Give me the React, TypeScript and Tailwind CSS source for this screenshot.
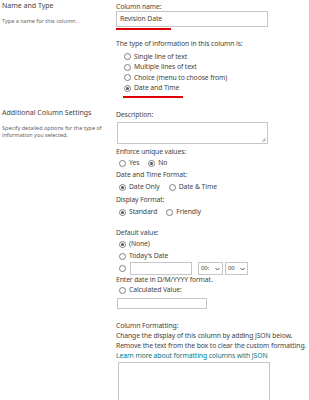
import React from "react";

function Radio({ checked, label, className }: { checked?: boolean; label?: string; className?: string }) {
  return (
    <span className={"flex items-center " + (className ?? "")}>
      <span className="flex h-[7px] w-[7px] shrink-0 items-center justify-center rounded-full border border-[#808080] bg-white">
        {checked && <span className="h-[3px] w-[3px] rounded-full bg-[#555]" />}
      </span>
      {label && <span className="ml-[3px]">{label}</span>}
    </span>
  );
}

function Line({ children, className }: { children: React.ReactNode; className?: string }) {
  return <div className={"h-[10px] leading-[10px] whitespace-nowrap " + (className ?? "")}>{children}</div>;
}

function Select({ value, className }: { value: string; className?: string }) {
  return (
    <span
      className={
        "flex h-[13px] items-center justify-between border border-[#c6c6c6] bg-white px-[2px] text-[6px] " +
        (className ?? "")
      }
    >
      <span>{value}</span>
      <svg width="5" height="4" viewBox="0 0 5 4">
        <path d="M0.5 1 L2.5 3 L4.5 1" fill="none" stroke="#444" strokeWidth="0.9" />
      </svg>
    </span>
  );
}

export default function App() {
  return (
    <div
      className="flex h-[400px] w-[309px] overflow-hidden bg-white text-[#444]"
      style={{ fontFamily: "'Noto Sans', 'Open Sans', sans-serif" }}
    >
      {/* left labels */}
      <div className="w-[116px] shrink-0 pl-[2px]">
        <div className="mt-[1px] h-[9px] text-[7px] leading-[9px] text-[#444]">Name and Type</div>
        <div className="mt-[7px] h-[8px] text-[5.5px] leading-[8px] text-[#666]">Type a name for this column.</div>
        <div className="mt-[83px] h-[9px] text-[7px] leading-[9px] text-[#444]">Additional Column Settings</div>
        <div className="mt-[8px] text-[5.5px] leading-[7px] text-[#666]">
          Specify detailed options for the type of
          <br />
          information you selected.
        </div>
      </div>

      {/* right form */}
      <div className="flex-1 text-[6.8px] tracking-[-0.1px]">
        <div className="mt-[2px] h-[9px] leading-[9px]">Column name:</div>
        <div className="flex h-[16px] w-[152px] items-center border border-[#c6c6c6] px-[3px]">Revision Date</div>
        <div className="mt-[1px] h-[1.5px] w-[55px] bg-[#e00000]" />

        <Line className="mt-[9px]">The type of information in this column is:</Line>
        <div className="mt-[3px] pl-[8px]">
          <Radio className="h-[10.5px]" label="Single line of text" />
          <Radio className="h-[10.5px]" label="Multiple lines of text" />
          <Radio className="h-[10.5px]" label="Choice (menu to choose from)" />
          <Radio className="h-[10.5px]" checked label="Date and Time" />
        </div>
        <div className="ml-[7px] mt-[2.5px] h-[1.5px] w-[60px] bg-[#e00000]" />

        <Line className="mt-[12.5px]">Description:</Line>
        <div className="relative ml-[1px] mt-[2px] h-[22px] w-[151px] border border-[#c6c6c6]">
          <svg className="absolute bottom-[1px] right-[1px]" width="5" height="5" viewBox="0 0 5 5">
            <path d="M1 4.5 L4.5 1 M2.5 4.5 L4.5 2.5 M4 4.5 L4.5 4" stroke="#666" strokeWidth="0.6" />
          </svg>
        </div>

        <Line className="mt-[2.5px]">Enforce unique values:</Line>
        <div className="mt-[1.5px] flex h-[11px] items-center pl-[3px]">
          <Radio label="Yes" />
          <Radio className="ml-[9px]" checked label="No" />
        </div>

        <Line className="mt-[1px]">Date and Time Format:</Line>
        <div className="mt-[2px] flex h-[11px] items-center pl-[3px]">
          <Radio checked label="Date Only" />
          <Radio className="ml-[9px]" label="Date & Time" />
        </div>

        <Line className="mt-[1.5px]">Display Format:</Line>
        <div className="mt-[2.5px] flex h-[11px] items-center pl-[3px]">
          <Radio checked label="Standard" />
          <Radio className="ml-[9px]" label="Friendly" />
        </div>

        <Line className="mt-[9.5px]">Default value:</Line>
        <div className="mt-[1.5px] pl-[3px]">
          <Radio className="h-[11px]" checked label="(None)" />
          <Radio className="mt-[1px] h-[11px]" label="Today's Date" />
          <div className="flex h-[13px] items-center">
            <Radio />
            <span className="ml-[4px] h-[13px] w-[62px] border border-[#c6c6c6]" />
            <Select className="ml-[6px] w-[25px]" value="00:" />
            <Select className="ml-[2px] w-[23px]" value="00" />
          </div>
        </div>
        <Line>Enter date in D/M/YYYY format.</Line>
        <Radio className="h-[10px] pl-[3px]" label="Calculated Value:" />
        <div className="ml-[1px] mt-[2.5px] h-[11px] w-[90px] border border-[#c6c6c6]" />

        <Line className="mt-[12px]">Column Formatting:</Line>
        <Line>Change the display of this column by adding JSON below.</Line>
        <Line>Remove the text from the box to clear the custom formatting.</Line>
        <Line className="text-[#03787c]">Learn more about formatting columns with JSON</Line>
        <div className="ml-[2px] mt-[1px] h-[60px] w-[152px] border border-[#c6c6c6]" />
      </div>
    </div>
  );
}
